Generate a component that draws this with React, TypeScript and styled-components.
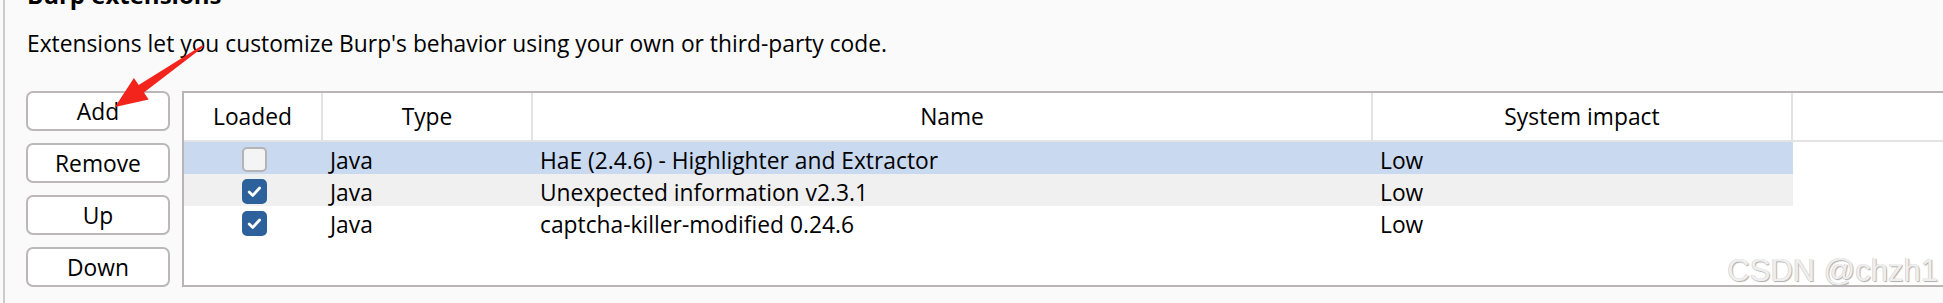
import * as React from 'react'
import styled, { createGlobalStyle } from 'styled-components'

const GlobalStyle = createGlobalStyle`
  body {
    margin: 0;
    background: #fafafa;
    font-family: 'Open Sans', 'Noto Sans', sans-serif;
    color: #000;
  }
`

type Extension = {
  loaded: boolean
  type: string
  name: string
  impact: string
}

const extensions: Extension[] = [
  { loaded: false, type: 'Java', name: 'HaE (2.4.6) - Highlighter and Extractor', impact: 'Low' },
  { loaded: true, type: 'Java', name: 'Unexpected information v2.3.1', impact: 'Low' },
  { loaded: true, type: 'Java', name: 'captcha-killer-modified 0.24.6', impact: 'Low' },
]

const columns = ['Loaded', 'Type', 'Name', 'System impact']

const Checkbox = ({ checked }: { checked: boolean }) => (
  <Box $checked={checked}>
    {checked && (
      <svg width="25" height="25" viewBox="0 0 25 25">
        <path
          d="M7.2 13 L10.8 16.4 L17.6 9"
          fill="none"
          stroke="#fff"
          strokeWidth="2.8"
          strokeLinecap="round"
          strokeLinejoin="round"
        />
      </svg>
    )}
  </Box>
)

// red annotation arrow pointing at the Add button
const Arrow = () => (
  <ArrowSvg width="240" height="130" viewBox="0 0 240 130">
    <polygon
      points="115,107 148.7,99.5 143.9,92.5 203.6,46.8 202.4,45.2 138.7,85.1 133.9,78.1"
      fill="#f2241c"
    />
  </ArrowSvg>
)

export default function App() {
  return (
    <>
      <GlobalStyle />
      <Frame>
        <Intro>
          <Title>Burp extensions</Title>
          <Description>
            Extensions let you customize Burp's behavior using your own or third-party code.
          </Description>
        </Intro>
        <Content>
          <ButtonColumn>
            <Button>Add</Button>
            <Button>Remove</Button>
            <Button>Up</Button>
            <Button>Down</Button>
          </ButtonColumn>
          <Table>
            <HeaderRow>
              {columns.map(col => (
                <HeaderCell key={col}>{col}</HeaderCell>
              ))}
              <Filler />
            </HeaderRow>
            {extensions.map((ext, i) => (
              <Row key={ext.name} $tone={i === 0 ? 'selected' : i % 2 === 1 ? 'alt' : 'plain'}>
                <CheckCell>
                  <Checkbox checked={ext.loaded} />
                </CheckCell>
                <Cell>{ext.type}</Cell>
                <Cell>{ext.name}</Cell>
                <Cell>{ext.impact}</Cell>
              </Row>
            ))}
          </Table>
        </Content>
        <Watermark>CSDN @chzh1</Watermark>
      </Frame>
      <Arrow />
    </>
  )
}

const Frame = styled.div`
  position: relative;
  height: 303px;
  margin-left: 3px;
  border-left: 2px solid #cbcbcb;
  padding-left: 21px;
  box-sizing: border-box;
  overflow: hidden;
`

const Intro = styled.div`
  padding-left: 1px;
`

const Title = styled.h1`
  margin: -17px 0 0 0;
  font-size: 24px;
  line-height: 24px;
  font-weight: 700;
`

const Description = styled.p`
  margin: 24px 0 0 0;
  font-size: 22.8px;
  line-height: 26px;
`

const Content = styled.div`
  display: flex;
  gap: 12px;
  margin-top: 34px;
`

const ButtonColumn = styled.div`
  display: flex;
  flex-direction: column;
  gap: 12px;
  width: 144px;
  flex-shrink: 0;
`

const Button = styled.button`
  height: 40px;
  box-sizing: border-box;
  border: 2px solid #bcb8b8;
  border-radius: 7px;
  background: #fff;
  font-family: inherit;
  font-size: 22.8px;
  color: #000;
  padding: 0;
`

const Table = styled.div`
  flex: 1;
  height: 196px;
  margin-right: -8px;
  box-sizing: border-box;
  border: 2px solid #bab5b5;
  background: #fff;
`

const HeaderRow = styled.div`
  display: grid;
  grid-template-columns: 139px 210px 840px 420px 1fr;
  height: 49px;
  box-sizing: border-box;
  border-bottom: 2px solid #e3e3e3;
`

const HeaderCell = styled.div`
  display: flex;
  align-items: center;
  justify-content: center;
  border-right: 2px solid #e3e3e3;
  font-size: 22.8px;
`

const Filler = styled.div``

const toneColors = {
  selected: '#c9d9ef',
  alt: '#f0f0f0',
  plain: '#fff',
}

const Row = styled.div<{ $tone: keyof typeof toneColors }>`
  display: grid;
  grid-template-columns: 139px 210px 840px 420px;
  width: 1609px;
  height: 32px;
  background: ${p => toneColors[p.$tone]};
`

const Cell = styled.div`
  display: flex;
  align-items: center;
  padding: 3px 7px 0 7px;
  font-size: 22.8px;
  white-space: nowrap;
`

const CheckCell = styled.div`
  display: flex;
  align-items: center;
  justify-content: center;
  padding-left: 1px;
`

const Box = styled.div<{ $checked: boolean }>`
  width: 25px;
  height: 25px;
  box-sizing: border-box;
  border-radius: 5px;
  border: 2px solid ${p => (p.$checked ? '#2c619b' : '#b4b4b4')};
  background: ${p => (p.$checked ? '#2c619b' : '#f4f4f4')};
  display: flex;
  align-items: center;
  justify-content: center;

  svg {
    flex-shrink: 0;
  }
`

const Watermark = styled.div`
  position: absolute;
  right: 5px;
  top: 253px;
  font-family: 'Liberation Sans', Arial, sans-serif;
  font-size: 31px;
  line-height: 35px;
  color: #efefef;
  text-shadow: 1px 1px 1px #aeaeae, -0.5px -0.5px 0.5px #c8c8c8;
  white-space: nowrap;
`

const ArrowSvg = styled.svg`
  position: absolute;
  left: 0;
  top: 0;
  pointer-events: none;
`
